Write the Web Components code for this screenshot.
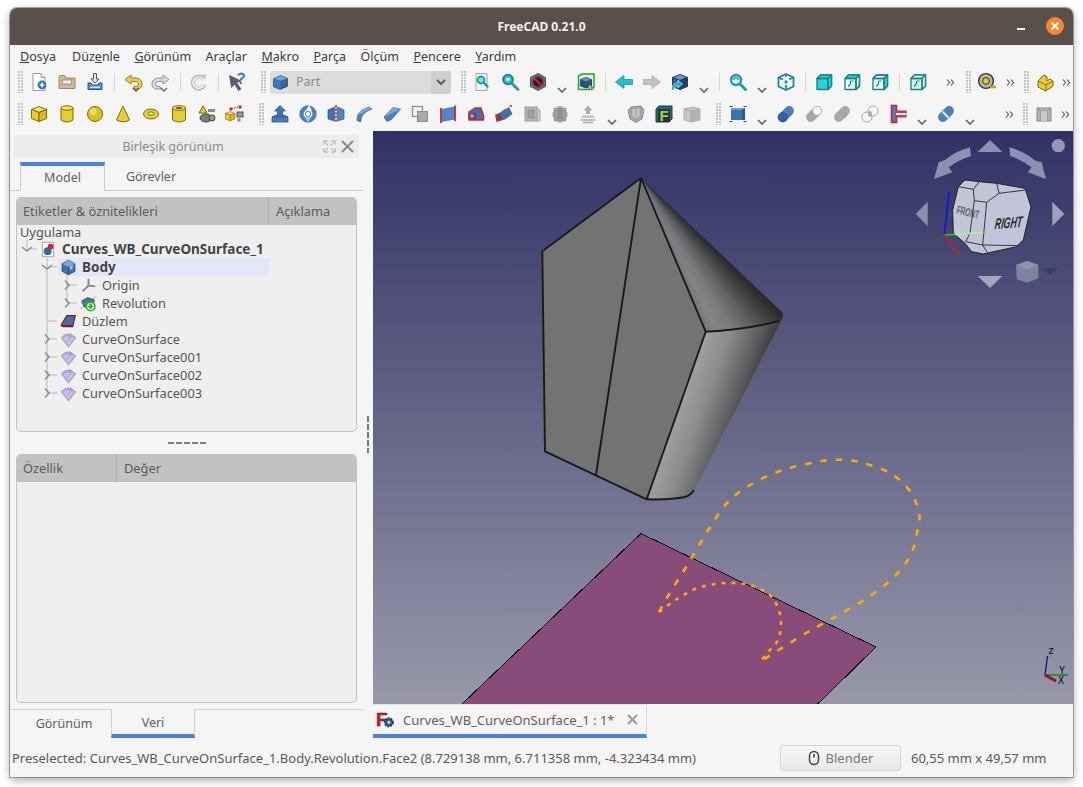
<!DOCTYPE html>
<html lang="tr">
<head>
<meta charset="utf-8">
<title>FreeCAD 0.21.0</title>
<style>
  html, body { margin: 0; background: #fff; font-family: "Noto Sans", "DejaVu Sans", sans-serif; }
  body { width: 1083px; height: 787px; overflow: hidden; padding: 8px 10px 10px; box-sizing: border-box; }
</style>
</head>
<body>
<app-window>
  <title-bar slot="title">FreeCAD 0.21.0</title-bar>

  <menu-bar slot="menu">
    <menu-item style="margin-right:1.5px"><u>D</u>osya</menu-item>
    <menu-item>Düz<u>e</u>nle</menu-item>
    <menu-item><u>G</u>örünüm</menu-item>
    <menu-item>Araçlar</menu-item>
    <menu-item><u>M</u>akro</menu-item>
    <menu-item><u>P</u>arça</menu-item>
    <menu-item>Ölçüm</menu-item>
    <menu-item><u>P</u>encere</menu-item>
    <menu-item><u>Y</u>ardım</menu-item>
  </menu-bar>

  <tool-bar slot="tools">
    <tool-grip></tool-grip>
    <tool-btn icon="new"></tool-btn><tool-btn icon="open"></tool-btn><tool-btn icon="save"></tool-btn>
    <tool-sep></tool-sep>
    <tool-btn icon="undo"></tool-btn><tool-btn icon="redo"></tool-btn>
    <tool-sep></tool-sep>
    <tool-btn icon="refresh"></tool-btn>
    <tool-sep></tool-sep>
    <tool-btn icon="what"></tool-btn>
    <tool-grip style="margin-left:10px;margin-right:3px"></tool-grip>
    <wb-combo>Part</wb-combo>
    <tool-grip style="margin-left:10px"></tool-grip>
    <tool-btn icon="fitall"></tool-btn><tool-btn icon="fitsel"></tool-btn><tool-btn icon="nosym"></tool-btn><tool-chev></tool-chev>
    <tool-btn icon="boxsel"></tool-btn>
    <tool-sep></tool-sep>
    <tool-btn icon="back"></tool-btn><tool-btn icon="fwd"></tool-btn><tool-btn icon="link"></tool-btn><tool-chev></tool-chev>
    <tool-sep></tool-sep>
    <tool-btn icon="zoom"></tool-btn><tool-chev></tool-chev>
    <tool-btn icon="iso"></tool-btn>
    <tool-sep></tool-sep>
    <tool-btn icon="front"></tool-btn><tool-btn icon="top"></tool-btn><tool-btn icon="right"></tool-btn>
    <tool-sep></tool-sep>
    <tool-btn icon="wire"></tool-btn>
    <tool-more style="width:31px;margin-left:3px"></tool-more>
    <tool-grip></tool-grip>
    <tool-btn icon="measure"></tool-btn><tool-more></tool-more>
    <tool-grip style="margin-left:5px"></tool-grip>
    <tool-btn icon="solid"></tool-btn><tool-more style="width:15px"></tool-more>
  </tool-bar>

  <tool-bar slot="tools">
    <tool-grip></tool-grip>
    <tool-btn icon="box"></tool-btn><tool-btn icon="cyl"></tool-btn><tool-btn icon="sphere"></tool-btn><tool-btn icon="cone"></tool-btn>
    <tool-btn icon="torus"></tool-btn><tool-btn icon="tube"></tool-btn><tool-btn icon="prims"></tool-btn><tool-btn icon="builder"></tool-btn>
    <tool-grip style="margin-left:10px"></tool-grip>
    <tool-btn icon="extrude"></tool-btn><tool-btn icon="revolve"></tool-btn><tool-btn icon="mirror"></tool-btn><tool-btn icon="fillet"></tool-btn>
    <tool-btn icon="chamfer"></tool-btn><tool-btn icon="facemake"></tool-btn><tool-btn icon="ruled"></tool-btn><tool-btn icon="loft"></tool-btn>
    <tool-btn icon="sweep"></tool-btn><tool-btn icon="gcomp"></tool-btn><tool-btn icon="gstack"></tool-btn><tool-btn icon="gup"></tool-btn><tool-chev></tool-chev>
    <tool-btn icon="gshell"></tool-btn><tool-btn icon="feat"></tool-btn><tool-btn icon="gcube"></tool-btn>
    <tool-grip style="margin-left:10px;margin-right:2px"></tool-grip>
    <tool-btn icon="compound"></tool-btn><tool-chev></tool-chev>
    <tool-btn icon="bool"></tool-btn><tool-btn icon="cut"></tool-btn><tool-btn icon="fuse"></tool-btn><tool-btn icon="common"></tool-btn>
    <tool-btn icon="join"></tool-btn><tool-chev></tool-chev>
    <tool-btn icon="split"></tool-btn><tool-chev></tool-chev>
    <tool-more style="margin-left:20px"></tool-more>
    <tool-grip style="margin-left:5px"></tool-grip>
    <tool-btn icon="gbox"></tool-btn><tool-more style="width:15px"></tool-more>
  </tool-bar>

  <side-panel slot="side">
    <dock-title>Birleşik görünüm</dock-title>
    <top-tabs></top-tabs>
    <tree-box>
      <tree-head slot="head"><span>Etiketler &amp; öznitelikleri</span><span>Açıklama</span></tree-head>
      <tree-root>Uygulama</tree-root>
      <tree-row level="0" exp="open" last icon="doc" bold>Curves_WB_CurveOnSurface_1</tree-row>
      <tree-row level="1" exp="open" icon="body" bold active>Body</tree-row>
      <tree-row level="2" exp="closed" pass="1" icon="origin">Origin</tree-row>
      <tree-row level="2" exp="closed" pass="1" last icon="rev">Revolution</tree-row>
      <tree-row level="1" icon="plane">Düzlem</tree-row>
      <tree-row level="1" exp="closed" icon="surf">CurveOnSurface</tree-row>
      <tree-row level="1" exp="closed" icon="surf">CurveOnSurface001</tree-row>
      <tree-row level="1" exp="closed" icon="surf">CurveOnSurface002</tree-row>
      <tree-row level="1" exp="closed" last icon="surf">CurveOnSurface003</tree-row>
    </tree-box>
    <h-split></h-split>
    <tree-box style="height:249px;margin-top:0">
      <tree-head slot="head" style="--col:101px"><span>Özellik</span><span>Değer</span></tree-head>
    </tree-box>
    <bottom-tabs></bottom-tabs>
  </side-panel>

  <v-split slot="split"></v-split>

  <view-area slot="view">
    <view-3d></view-3d>
    <doc-tab>Curves_WB_CurveOnSurface_1 : 1*</doc-tab>
  </view-area>

  <status-bar slot="status">Preselected: Curves_WB_CurveOnSurface_1.Body.Revolution.Face2 (8.729138 mm, 6.711358 mm, -4.323434 mm)</status-bar>
</app-window>

<script>
// small helper, every element below is the same shape: css + markup in an open shadow root
function define(name, css, html, setup) {
  const tpl = document.createElement('template');
  tpl.innerHTML = `<style>${css}</style>${html}`;
  customElements.define(name, class extends HTMLElement {
    constructor() {
      super();
      this.attachShadow({ mode: 'open' });
      this.shadowRoot.appendChild(tpl.content.cloneNode(true));
    }
    connectedCallback() { if (setup) setup(this, this.shadowRoot); }
  });
}

// --- icons, all on a 20x20 box ---
const line = '#3a3a3a';
const cube = (t, l, r, s = line) => `<g stroke="${s}" stroke-width=".9" stroke-linejoin="round"><path d="M10 2.5 17.5 5.5 10 8.5 2.5 5.5Z" fill="${t}"/><path d="M2.5 5.5 10 8.5V17.5L2.5 14.5Z" fill="${l}"/><path d="M17.5 5.5 10 8.5V17.5L17.5 14.5Z" fill="${r}"/></g>`;
// the standard view boxes: front face bottom-left, back face shifted up-right
const cyan = '#22d3d8', teal = '#16868c';
const viewBox = (all, topFill, sideFill) => `<g stroke="${teal}" stroke-width="1.4" stroke-linejoin="round">
  <path d="M3 6.5 6.5 3H17.5V14L14 17.5H3Z" fill="${all || '#f2fbfb'}"/>
  <path d="M3 6.5 6.5 3H17.5L14 6.5Z" fill="${topFill || all || 'none'}"/>
  <path d="M14 6.5 17.5 3V14L14 17.5Z" fill="${sideFill || all || 'none'}"/>
  <path d="M3 6.5H14V17.5" fill="none"/></g>`;
const hidden = `<path d="M6 14.5 8.5 12M8.5 9H11.5M8.5 9V12" fill="none" stroke="${teal}" stroke-width="1.2"/>`;
const mag = (c, ring = '#e8ffff') => `<circle cx="8" cy="8" r="5" fill="${ring}" stroke="${c}" stroke-width="2.4"/><path d="M11.5 11.5 17.5 17.5" stroke="${c}" stroke-width="3" stroke-linecap="round"/>`;
const arrow = (c, s) => `<path d="M1.5 10 10 3.5V7.5H18.5V12.5H10V16.5Z" fill="${c}" stroke="${s}" stroke-width=".7" stroke-linejoin="round"/>`;
const blue = '#4a7fbb', bd = '#2a5a90', red = '#d8222a';
// the boolean icons are all the same diagonal capsule
const capsule = (c, w = 9.5) => `<path d="M6.8 13.2 13.2 6.8" stroke="${c}" stroke-width="${w}" stroke-linecap="round"/>`;
const surf = `<path d="M1.5 8Q9 -1 18.5 8L10 18.5Z" fill="#a9a3f0" stroke="#a0a0a0" stroke-width="1"/><path d="M3 8Q9 5 17 8L10 17Z" fill="#c4bff5"/><path d="M12 2.5Q15 7 7 13" fill="none" stroke="#e8763a" stroke-width="1.1" stroke-dasharray="2 1"/><path d="M2.5 9 10 18.5 17.5 9" fill="none" stroke="#b0b0b0" stroke-width="1.5"/>`;
const icons = {
  new: `<path d="M4 1.5H12L16 5.5V18.5H4Z" fill="#fff" stroke="#9a9a9a"/><path d="M12 1.5V5.5H16" fill="#e5e5e5" stroke="#9a9a9a"/><circle cx="13" cy="13" r="4.4" fill="#2f6fc4"/><path d="M10.6 13H15.4M13 10.6V15.4" stroke="#fff" stroke-width="1.5"/>`,
  open: `<path d="M2 5V16.5H18V6H9L7.5 3.5H3Z" fill="#cdb99a" stroke="#9a8869"/><rect x="5.5" y="8" width="9" height="4" fill="#f3efe6" stroke="#8d7a5c" stroke-width=".7"/>`,
  save: `<path d="M8.5 1.5H11.5V7H14L10 11 6 7H8.5Z" fill="#e9e9e9" stroke="#555"/><path d="M3 11V17.5H17V11H14L12.5 13H7.5L6 11Z" fill="#4f8fd0" stroke="#28588c"/><rect x="5" y="14.5" width="10" height="1.5" fill="#d5e6f7"/>`,
  undo: `<path d="M8 3 2 7.5 8 12V9.5H13Q15.5 9.5 15.5 12T13 14.5H11L10 17H13.5Q19 17 19 12T13.5 6H8Z" fill="#ecd146" stroke="#8c7412" stroke-width=".9" stroke-linejoin="round"/><path d="M10 16 13 19 16 16" fill="none" stroke="#555" stroke-width="1.4"/>`,
  redo: `<path d="M12 3 18 7.5 12 12V9.5H7Q4.5 9.5 4.5 12T7 14.5H9L10 17H6.5Q1 17 1 12T6.5 6H12Z" fill="#d9d9d9" stroke="#8c8c8c" stroke-width=".9" stroke-linejoin="round"/><path d="M10 16 13 19 16 16" fill="none" stroke="#666" stroke-width="1.4"/>`,
  refresh: `<path d="M15.5 6.5A7.2 7.2 0 1 0 16.5 13" fill="none" stroke="#c2c2c2" stroke-width="2"/><path d="M14 9A4.4 4.4 0 1 0 14 12" fill="none" stroke="#d5d5d5" stroke-width="1.5"/><path d="M11.5 2.5H17V8Z" fill="#c8c8c8"/>`,
  what: `<path d="M2.5 3.5 14 9 9.5 10.5 14 17 11.5 18.5 7.5 12 4.5 15.5Z" fill="#59616e" stroke="#3c424d" stroke-width=".6"/><path d="M11 3.2Q13.5 .6 16 2.2T15 6.3Q13.8 7 13.8 8.6" fill="none" stroke="#4a7fbb" stroke-width="2.2"/><circle cx="13.8" cy="11" r="1.3" fill="#4a7fbb"/>`,
  fitall: `<path d="M4 1.5H15V18.5H4Z" fill="#f4f4f4" stroke="#a5a5a5"/><circle cx="9" cy="8" r="3.5" fill="#7fdfe2" stroke="#1e9aa2" stroke-width="1.8"/><path d="M11.5 10.5 15.5 14.5" stroke="#1e9aa2" stroke-width="2.4" stroke-linecap="round"/>`,
  fitsel: `<circle cx="8" cy="7.5" r="4.8" fill="#39c2c8" stroke="#16868c" stroke-width="2"/><circle cx="8" cy="7.5" r="1.8" fill="#e8ffff"/><path d="M11.5 11 18 17.5" stroke="#1e9aa2" stroke-width="2.8" stroke-linecap="round"/>`,
  nosym: `<path d="M10 1.5 17.5 5.5V14.5L10 18.5 2.5 14.5V5.5Z" fill="#1f9aa2" stroke="#0f6a70"/><circle cx="10" cy="10" r="5.5" fill="#123" stroke="#d02030" stroke-width="2"/><path d="M6 6 14 14" stroke="#d02030" stroke-width="2.2"/>`,
  boxsel: `<path d="M2.5 4 6 2H18V15L15 17.5H2.5Z" fill="#dfeee0" stroke="#2aa12a" stroke-width="1.5"/><path d="M4.5 7.5 10 5.5 15.5 7.5V14L10 16 4.5 14Z" fill="#27517f" stroke="#1d3350" stroke-width=".8"/><path d="M4.5 7.5 10 5.5 15.5 7.5 10 9.5Z" fill="#5d8fc0"/><path d="M13 13 18 18" stroke="#999" stroke-width="1.6"/><path d="M13 13V17L14.5 15.5H17Z" fill="#fff" stroke="#555" stroke-width=".6"/>`,
  back: arrow('#1cc0c8', '#128a90'),
  fwd: `<g transform="matrix(-1 0 0 1 20 0)">${arrow('#c2c2c2', '#a8a8a8')}</g>`,
  link: cube('#6b9bcb', '#2f5f95', '#1f4470', '#1d3350') + `<path d="M1.5 18Q2 11 8 10.5V8L12.5 12 8 16V13.5Q5 13.5 4 18Z" fill="#21b0c0" stroke="#fff" stroke-width=".5"/>`,
  zoom: mag('#1e9aa2', '#e8ffff') + `<path d="M5.5 8A2.5 2.5 0 0 1 10.5 8" fill="none" stroke="#1e9aa2" stroke-width="1.3"/>`,
  iso: `<g fill="none" stroke="${teal}" stroke-width="1.7" stroke-linejoin="round"><path d="M10 2 17.5 5.5V14.5L10 18 2.5 14.5V5.5Z" fill="#eefafa"/><path d="M2.5 5.5 7 7.5M17.5 5.5 13 7.5M10 18V13M10 2V5"/><path d="M8 10H12M10 8V12" stroke-width="1.2"/></g>`,
  front: viewBox(cyan),
  top: viewBox(null, cyan) + hidden,
  right: viewBox(null, null, cyan) + hidden,
  wire: viewBox('#dff5f6') + hidden,
  measure: `<circle cx="9" cy="9" r="7.4" fill="#b7b7a8" stroke="#333" stroke-width="1.4"/><circle cx="9" cy="9" r="3.4" fill="#e8c92a" stroke="#333"/><path d="M13 15H19" stroke="#c9a914" stroke-width="2.4"/>`,
  solid: `<path d="M3 9 9 3 12 5V9L15 7 18 9V14L11 19 3 15Z" fill="#e8cf30" stroke="#7a6a10" stroke-linejoin="round"/><path d="M3 9 11 13V19M11 13 18 9M9 3 12 5" fill="none" stroke="#7a6a10" stroke-width=".9"/>`,
  box: cube('#f5e650', '#eccf1f', '#dcbb12', '#6e5f10'),
  cyl: `<path d="M4 4V16Q10 20 16 16V4Z" fill="#e8cf30" stroke="#7a6a10"/><ellipse cx="10" cy="4" rx="6" ry="2.2" fill="#f5e650" stroke="#7a6a10"/>`,
  sphere: `<circle cx="10" cy="10" r="7.5" fill="#dcc21f" stroke="#7a6a10"/><circle cx="8" cy="7.5" r="3.5" fill="#efdb55"/>`,
  cone: `<path d="M10 2 16.5 16Q10 19.5 3.5 16Z" fill="#e8cf30" stroke="#7a6a10" stroke-linejoin="round"/>`,
  torus: `<ellipse cx="10" cy="10" rx="7.5" ry="5" fill="#e8cf30" stroke="#7a6a10"/><ellipse cx="10" cy="9.5" rx="3" ry="1.6" fill="#fff7c0" stroke="#7a6a10"/>`,
  tube: `<path d="M3.5 4V16Q10 20 16.5 16V4Z" fill="#e8cf30" stroke="#7a6a10"/><ellipse cx="10" cy="4" rx="6.5" ry="2.4" fill="#f5e650" stroke="#7a6a10"/><ellipse cx="10" cy="4" rx="3.4" ry="1.1" fill="#665a10"/>`,
  prims: `<path d="M6 2 10 9H2Z" fill="#e8cf30" stroke="#6e5f10"/><ellipse cx="9" cy="14" rx="6" ry="4" fill="#7d7d6a" stroke="#444"/><rect x="11" y="5" width="7" height="3" fill="#8f8f80"/><circle cx="15" cy="14" r="3" fill="#9a9a8a" stroke="#444"/>`,
  builder: `<g transform="translate(-1 6) scale(.62)">${cube('#f5e650', '#eccf1f', '#dcbb12', '#6e5f10')}</g><rect x="12" y="8" width="6" height="5" fill="#999" stroke="#555"/><path d="M6 5 13 3" stroke="${red}" stroke-width="1" stroke-dasharray="2 1"/><circle cx="6" cy="5" r="1.7" fill="${red}"/><circle cx="15" cy="3" r="1.7" fill="${red}"/><circle cx="14" cy="16" r="1.7" fill="#888"/>`,
  extrude: `<path d="M2 13 6 11H14L18 13V18H2Z" fill="${blue}" stroke="${bd}" stroke-width=".8"/><path d="M2 13H18" stroke="${bd}" stroke-width=".8"/><path d="M10 1.5 15.5 7H12.5V13H7.5V7H4.5Z" fill="#3d72b0" stroke="${bd}" stroke-width=".8"/>`,
  revolve: `<circle cx="10" cy="10" r="6.2" fill="none" stroke="#4f83bd" stroke-width="3.6"/><circle cx="10" cy="10" r="8.2" fill="none" stroke="${bd}" stroke-width=".8"/><circle cx="10" cy="10" r="2.6" fill="#f5f5f5" stroke="${bd}" stroke-width=".8"/><path d="M11 1 14 7 8 7Z" fill="#f5f5f5"/><path d="M10 19 7 13.5 13 13.5Z" fill="#9dbcdc"/>`,
  mirror: `<path d="M2 6 8.5 3V17L2 15Z" fill="#3d72b0" stroke="${bd}" stroke-width=".7"/><path d="M18 6 11.5 3V17L18 15Z" fill="#4f83bd" stroke="${bd}" stroke-width=".7"/><path d="M10 1V19" stroke="${red}" stroke-width="1.6" stroke-dasharray="2.4 1.2"/>`,
  fillet: `<path d="M3 15Q4 6 15 3L18 5Q9 8 7.5 13.5L6.5 18 3 16.5Z" fill="${blue}" stroke="${bd}" stroke-width=".7"/><path d="M3 11Q6 5 15 3L18 5Q11 6.5 8 10Z" fill="#7aa6d6"/>`,
  chamfer: `<path d="M2 13 11 3.5 18.5 5 9.5 15.5 5 17.5Z" fill="${blue}" stroke="${bd}" stroke-width=".7"/><path d="M2 13 11 3.5 18.5 5 9 10Z" fill="#7aa6d6"/>`,
  facemake: `<rect x="2.5" y="2.5" width="10" height="10" fill="#f5f5f5" stroke="#8f8f8f" stroke-width="1.3"/><rect x="7.5" y="7.5" width="10" height="10" fill="#aaa" stroke="#8f8f8f"/>`,
  ruled: `<path d="M3 5 17 2.5V15.5L3 18Z" fill="#4f88c8"/><path d="M3 4V19M17 1.5V17" stroke="${red}" stroke-width="1.8"/>`,
  loft: `<path d="M3 8 9 4H15L17.5 12V16H3Z" fill="#3d72b0" stroke="${red}" stroke-width="1.5" stroke-linejoin="round"/><path d="M3 9H10V15H3Z" fill="#2a5a90" stroke="${red}"/><rect x="4.5" y="10.5" width="3" height="3" fill="#9dbcdc"/>`,
  sweep: `<path d="M2 12 10 6 15 4 18 10 11 15 4 17Z" fill="#3d72b0" stroke="${bd}" stroke-width=".7"/><path d="M2 11 6 10 8 15 3 17Z" fill="#2a5a90" stroke="${red}" stroke-width="1.5"/><path d="M13 5 17 1.5" stroke="${red}" stroke-dasharray="2 1"/><circle cx="17" cy="2" r="1" fill="${red}"/>`,
  gcomp: `<rect x="3" y="3" width="12" height="14" fill="#b2b2b2" stroke="#a0a0a0"/><path d="M15 4 18 6V17L15 17Z" fill="#c9c9c9" stroke="#a8a8a8"/><rect x="6" y="6" width="6" height="8" fill="#a0a0a0" stroke="#8f8f8f"/>`,
  gstack: `<path d="M4 4H16V8H4ZM3 8.5H17V12.5H3ZM4 13H16V17H4Z" fill="#a0a0a0" stroke="#8f8f8f" stroke-width=".6"/><path d="M7.5 2H12.5V18.5H7.5Z" fill="#8a8a8a" opacity=".65"/>`,
  gup: `<path d="M10 1.5 14.5 6.5H12V10H8V6.5H5.5Z" fill="#adadad"/><path d="M5 11.5H15L17.5 14H2.5Z" fill="#c0c0c0"/><path d="M2.5 16H17.5M5 18.5H15" stroke="#a8a8a8" stroke-width="1.4"/>`,
  gshell: `<path d="M5 3 15 2 18 6 16 15 10 18.5 4 15 2 6Z" fill="#a8a8a8" stroke="#8f8f8f"/><path d="M5.5 4.5 14.5 4 14 13 10 15.5 6 13Z" fill="#c4c4c4" stroke="#929292" stroke-width=".7"/><path d="M10 4V15" stroke="#929292" stroke-width=".7"/>`,
  feat: `<path d="M2 5 5 2H18V15L15 18H2Z" fill="#2b6486" stroke="#14384d"/><rect x="4" y="5" width="12" height="13" fill="#26333a"/><text x="10" y="17" font-size="15" font-weight="700" font-family="Liberation Sans" fill="#9ddb1a" text-anchor="middle">F</text>`,
  gcube: `<path d="M2 5 11 3 18 5V16L9 18 2 16Z" fill="#c6c6c6" stroke="#b0b0b0"/><path d="M2 5 9 7 18 5M9 7V18" fill="none" stroke="#a6a6a6"/><path d="M9 7 18 5V16L9 18Z" fill="#b3b3b3"/>`,
  compound: `<path d="M3 4H17V16H3Z" fill="#3d72b0"/><path d="M3 4H17L14 6H3Z" fill="#6f9ccb"/><path d="M14 6 17 4V16L14 16Z" fill="#2a5a90"/><path d="M1.5 2.5H4.5M15.5 2.5H18.5M1.5 17.5H4.5M15.5 17.5H18.5" stroke="#444" stroke-width="1"/>`,
  bool: capsule('#4a7fbb') + `<circle cx="6.8" cy="13.2" r="4.7" fill="#2f62a0" stroke="${bd}" stroke-width=".8"/>`,
  cut: capsule('#a8a8a8') + `<circle cx="13.2" cy="6.8" r="4.4" fill="#fafafa" stroke="#b0b0b0" stroke-width=".8"/>`,
  fuse: capsule('#a8a8a8') + `<path d="M9.5 6.5A4.7 4.7 0 0 1 13.5 13.5" fill="none" stroke="#9a9a9a" stroke-width=".8"/>`,
  common: `<circle cx="7" cy="13" r="5" fill="#f7f7f7" stroke="#a8a8a8"/><circle cx="13" cy="7" r="5" fill="#f7f7f7" stroke="#a8a8a8"/><path d="M8 8.2A5 5 0 0 1 11.8 11.8 5 5 0 0 1 8 8.2" fill="#aaa"/><path d="M8.1 8.1Q7.3 11 9.3 12.9L11.9 11.9Q12.7 9 10.7 7.1Z" fill="#aaa"/>`,
  join: `<rect x="3.5" y="1.5" width="5" height="17" fill="${blue}" stroke="${red}" stroke-width="1.6"/><path d="M8.5 7H18V9H8.5M8.5 11H18V13H8.5" fill="${blue}" stroke="${red}" stroke-width="1.2"/><rect x="8" y="9" width="10" height="2" fill="#dfe8f2"/>`,
  split: capsule('#4a7fbb') + `<path d="M6.5 7.5 12.5 13.5" stroke="#f5f5f5" stroke-width="2.2"/><path d="M5 5 15 15" stroke="${bd}" stroke-width=".6" opacity=".4"/>`,
  gbox: `<rect x="3" y="4" width="14" height="13" fill="#b5b5b5" stroke="#8a8a8a"/><path d="M3 4 7 7H13L17 4M7 7V17M13 7V17" fill="none" stroke="#8a8a8a"/><rect x="7" y="7" width="6" height="10" fill="#c9c9c9"/>`,
  part: `<path d="M2 5.5 10 2 18 5V14.5L9.5 18 2 15Z" fill="#2f66a8" stroke="#1d3350" stroke-linejoin="round"/><path d="M2 5.5 10 2 18 5 10 8Z" fill="#73a2d4"/><path d="M2 5.5 10 8V18L2 15Z" fill="#3f78bc"/>`,
  doc: `<path d="M3 1.5H16V18.5H3Z" fill="#fff" stroke="#9a9a9a"/><circle cx="9" cy="12" r="4.6" fill="#2f6aa8"/><circle cx="12.5" cy="6.5" r="3.4" fill="#d8222a"/>`,
  body: `<path d="M10 1.5 17.5 5.5V14.5L10 18.5 2.5 14.5V5.5Z" fill="#3f74b0" stroke="#1f4470"/><path d="M2.5 5.5 10 1.5 17.5 5.5 10 9.5Z" fill="#7aa6d6"/><path d="M10 9.5V18.5" stroke="#1f4470"/><path d="M11.5 9 15 7V11L11.5 13Z" fill="#a9c6e6"/>`,
  origin: `<path d="M10 10V2M10 10 18 11M10 10 3 17" fill="none" stroke="#8a8a8a" stroke-width="2.2"/>`,
  rev: `<path d="M2 7 9 3 17 6 14 14 5 14Z" fill="#4779ad" stroke="#274a70"/><path d="M1 16 18 2" stroke="#d8222a" stroke-dasharray="2 1"/><circle cx="12.5" cy="13.5" r="5" fill="#fff" stroke="#18c418" stroke-width="2"/><path d="M11 10H14V13H16L12.5 17 9 13H11Z" fill="#18c418"/>`,
  plane: `<path d="M1.5 14 8 3H18L15 16H4Z" fill="#3f70a8" stroke="#8b1a22" stroke-width="1.4" stroke-linejoin="round"/><path d="M1 15H15" stroke="#8b1a22" stroke-width="1.6"/>`,
  surf,
  fcad: `<text x="0" y="17" font-size="20" font-weight="700" font-family="Liberation Sans" fill="#c8202a" stroke="#5a1015" stroke-width=".5">F</text><circle cx="13.5" cy="13" r="4.2" fill="#33609c" stroke="#1f3d66" stroke-width="2.2" stroke-dasharray="2 1"/><circle cx="13.5" cy="13" r="1.4" fill="#e4e8f0"/>`
};
const svgIcon = (n, s = 20) => `<svg width="${s}" height="${s}" viewBox="0 0 20 20" aria-hidden="true">${icons[n] || ''}</svg>`;
const pick = sel => (el, root) => { root.querySelector(sel).innerHTML = svgIcon(el.getAttribute('icon'), +el.getAttribute('size') || 20); };

// --- window shell ---
define('app-window', `
  :host { display: grid; width: 1063px; height: 769px; background: #f5f5f5; border-radius: 7px 7px 0 0; overflow: hidden;
    grid-template-columns: 353px 10px 700px; grid-template-rows: 37px 22px 64px 607px 39px;
    box-shadow: 0 0 0 1px rgba(0,0,0,.3), 0 3px 10px rgba(0,0,0,.35); color: #555; }
  .wide { grid-column: 1 / 4; }
  .tools { display: flex; flex-direction: column; gap: 2px; }
`, `
  <div class="wide"><slot name="title"></slot></div>
  <div class="wide"><slot name="menu"></slot></div>
  <div class="wide tools"><slot name="tools"></slot></div>
  <slot name="side"></slot><slot name="split"></slot><slot name="view"></slot>
  <div class="wide"><slot name="status"></slot></div>
`);

define('title-bar', `
  :host { display: flex; height: 37px; align-items: center; justify-content: center; position: relative; background: #5a504b;
    color: #f4f2f0; font: 700 12px "Noto Sans", sans-serif; }
  .btns { position: absolute; right: 9px; top: 9px; display: flex; align-items: center; gap: 21px; height: 18px; }
  .min { width: 8px; height: 2px; background: #fff; margin-top: 6px; }
  .close { width: 18px; height: 18px; border-radius: 50%; background: #f6872d; display: flex; align-items: center; justify-content: center; }
`, `<slot></slot><div class="btns"><div class="min"></div><div class="close"><svg width="10" height="10" viewBox="0 0 10 10"><path d="M1.5 1.5 8.5 8.5M8.5 1.5 1.5 8.5" stroke="#fff" stroke-width="1.9"/></svg></div></div>`);

define('menu-bar', `
  :host { display: flex; height: 22px; padding: 1px 0 0 10px; gap: 14.5px; align-items: center; box-sizing: border-box; color: #3c3c3c; font: 12.5px "Noto Sans", sans-serif; }
`, `<slot></slot>`);
define('menu-item', `:host { display: block; white-space: nowrap; }`, `<slot></slot>`);

// --- toolbars ---
define('tool-bar', `:host { display: flex; height: 30px; align-items: center; padding-left: 8px; }`, `<slot></slot>`);
define('tool-btn', `:host { display: flex; flex: none; width: 28px; height: 28px; align-items: center; justify-content: center; } svg { display: block; }`, `<span id="i" style="display:contents"></span>`, pick('#i'));
define('tool-sep', `:host { display: flex; flex: none; width: 10px; justify-content: center; } i { width: 1px; height: 18px; background: #d6d6d6; }`, `<i></i>`);
define('tool-grip', `:host { display: block; flex: none; width: 6px; height: 22px; margin-right: 1px;
  background: radial-gradient(circle at 1px 1px, #c4c4c4 1px, transparent 1.2px) 0 0 / 3px 3px; }`, ``);
define('tool-chev', `:host { display: flex; flex: none; width: 20px; height: 28px; justify-content: center; align-items: flex-end; padding-bottom: 3px; box-sizing: border-box; }`,
  `<svg width="10" height="6" viewBox="0 0 10 6"><path d="M1 1 5 5 9 1" fill="none" stroke="#666" stroke-width="1.7"/></svg>`);
define('tool-more', `:host { display: flex; flex: none; width: 18px; height: 28px; justify-content: center; align-items: center; }`,
  `<svg width="9" height="7" viewBox="0 0 9 7"><path d="M1 .5 3.6 3.5 1 6.5M5 .5 7.6 3.5 5 6.5" fill="none" stroke="#555" stroke-width="1.1"/></svg>`);
define('wb-combo', `
  :host { display: flex; flex: none; width: 181px; height: 23px; background: #dcdcdc; border-radius: 3px; overflow: hidden; align-items: center; color: #8a8a8a; font: 12.5px "Noto Sans", sans-serif; }
  .ic { margin: 0 3px 0 2px; display: flex; } .t { flex: 1; padding-left: 4px; line-height: 22px; }
  .arrow { width: 20px; height: 23px; background: #cfcfcf; display: flex; align-items: center; justify-content: center; }
`, `<span class="ic">${svgIcon('part', 17)}</span><span class="t"><slot></slot></span><span class="arrow"><svg width="10" height="6" viewBox="0 0 10 6"><path d="M1 1 5 5 9 1" fill="none" stroke="#555" stroke-width="1.8"/></svg></span>`);

// --- left dock ---
define('side-panel', `:host { display: flex; flex-direction: column; padding-top: 4px; box-sizing: border-box; width: 353px; } ::slotted(*) { flex: none; }`, `<slot></slot>`);
define('dock-title', `
  :host { display: flex; height: 23px; margin: 0 4px; width: 345px; box-sizing: border-box; padding-right: 27px; background: #ececec; border-radius: 2px; align-items: center; justify-content: center; position: relative; color: #8b8b8b; font: 12.5px "Noto Sans", sans-serif; }
  .b { position: absolute; right: 5px; top: 5px; display: flex; gap: 5px; align-items: center; }
`, `<slot></slot><span class="b">
  <svg width="13" height="13" viewBox="0 0 13 13"><path d="M1 4.5V1H4.5M8.5 1H12V4.5M1 8.5V12H4.5M12 8.5V12H8.5M3 3 5 5M10 3 8 5M3 10 5 8M10 10 8 8" fill="none" stroke="#9a9a9a" stroke-width="1"/></svg>
  <svg width="13" height="13" viewBox="0 0 13 13"><path d="M1 1 12 12M12 1 1 12" stroke="#8a8a8a" stroke-width="2"/></svg></span>`);
define('top-tabs', `
  :host { display: flex; height: 29px; margin-top: 4px; padding-left: 10px; border-bottom: 1px solid #cdcdcd; box-sizing: border-box; font: 12.5px "Noto Sans", sans-serif; color: #606060; }
  div { display: flex; align-items: center; justify-content: center; height: 28px; box-sizing: border-box; }
  .on { width: 85px; border-top: 4px solid #4a80ea; border-left: 1px solid #cdcdcd; border-right: 1px solid #cdcdcd; background: #f5f5f5; margin-bottom: -1px; height: 29px; padding-bottom: 2px; }
  .off { width: 92px; padding-top: 1px; }
`, `<div class="on">Model</div><div class="off">Görevler</div>`);
define('tree-box', `
  :host { display: block; width: 341px; height: 235px; margin: 6px 0 0 6px; box-sizing: border-box; background: #efefef; border: 1px solid #c2c2c2; border-top: 0; border-radius: 5px; overflow: hidden; font: 12.8px "Noto Sans", sans-serif; color: #555; }
`, `<slot name="head"></slot><slot></slot>`);
define('tree-head', `
  :host { display: grid; grid-template-columns: var(--col, 253px) 1fr; height: 28px; margin: 0 -1px; background: #c2c2c2; align-items: center; color: #5a5a5a; }
  ::slotted(span) { padding-left: 7px; line-height: 28px; }
  ::slotted(span:first-child) { border-right: 1px solid #acacac; }
`, `<slot></slot>`);
define('tree-root', `:host { display: block; height: 15px; line-height: 15px; padding-left: 3px; }`, `<slot></slot>`);
define('tree-row', `
  :host { display: flex; width: 253px; height: 18px; align-items: center; }
  svg.g { flex: none; display: block; }
  .item { flex: 1; display: flex; align-items: center; height: 18px; gap: 5px; padding-left: 2px; white-space: nowrap; min-width: 0; }
  .ic { display: flex; }
  :host([bold]) .item { font-weight: 700; font-size: 13.5px; color: #444; }
  :host([active]) .item { background: #e6e6fa; }
`, `<svg class="g" height="18"></svg><div class="item"><span class="ic"></span><slot></slot></div>`, (el, root) => {
  const lv = +el.getAttribute('level'), exp = el.getAttribute('exp'), last = el.hasAttribute('last');
  const pass = (el.getAttribute('pass') || '').split(',').filter(Boolean).map(Number);
  const x = 10 + 20 * lv;
  let d = `<path d="M${x} 0V${last ? 9 : 18}M${x} 9H${x + 10}" stroke="#b9b9b9" fill="none"/>`;
  pass.forEach(c => { d += `<path d="M${10 + 20 * c} 0V18" stroke="#b9b9b9"/>`; });
  if (exp === 'open') d += `<path d="M${x - 5} 7 ${x} 11 ${x + 5} 7" stroke="#8d8d8d" stroke-width="1.5" fill="none"/>`;
  if (exp === 'closed') d += `<path d="M${x - 2} 4.5 ${x + 2} 9 ${x - 2} 13.5" stroke="#8d8d8d" stroke-width="1.5" fill="none"/>`;
  const g = root.querySelector('svg.g');
  g.setAttribute('width', 20 * (lv + 1) + 1);
  g.innerHTML = d;
  root.querySelector('.ic').innerHTML = svgIcon(el.getAttribute('icon'), 17);
});
define('h-split', `:host { display: flex; height: 22px; padding-right: 8px; justify-content: center; align-items: center; } i { width: 38px; height: 2px; background: repeating-linear-gradient(90deg, #808080 0 6px, transparent 6px 8px); margin-left: 8px; }`, `<i></i>`);
define('bottom-tabs', `
  :host { display: flex; height: 29px; margin-top: 6px; font: 12.5px "Noto Sans", sans-serif; color: #606060; }
  div { height: 29px; display: flex; align-items: center; justify-content: center; box-sizing: border-box; }
  .off { width: 101px; padding-left: 7px; border-top: 1px solid #d2d2d2; padding-bottom: 1px; }
  .on { width: 84px; border-bottom: 4px solid #4a80ea; border-left: 1px solid #d2d2d2; border-right: 1px solid #d2d2d2; padding-top: 2px; }
  .rest { flex: 1; border-top: 1px solid #d2d2d2; }
`, `<div class="off">Görünüm</div><div class="on">Veri</div><div class="rest"></div>`);
define('v-split', `:host { display: flex; align-items: center; justify-content: center; padding-right: 1px; } i { width: 2px; height: 37px; background: repeating-linear-gradient(180deg, #777 0 6px, transparent 6px 8px); }`, `<i></i>`);

// --- 3d view ---
// smooth line through the points, the dashes look wrong on a plain polyline
const spline = pts => {
  let d = `M${pts[0]}`;
  for (let i = 0; i < pts.length - 1; i++) {
    const p0 = pts[i - 1] || pts[i], p1 = pts[i], p2 = pts[i + 1], p3 = pts[i + 2] || p2;
    d += `C${p1[0] + (p2[0] - p0[0]) / 6} ${p1[1] + (p2[1] - p0[1]) / 6} ${p2[0] - (p3[0] - p1[0]) / 6} ${p2[1] - (p3[1] - p1[1]) / 6} ${p2[0]} ${p2[1]}`;
  }
  return d;
};
const curveA = spline([[659, 612], [668, 596], [688, 564], [707, 532], [727, 503], [750, 485], [783, 470], [817, 462], [832, 460], [847, 460], [863, 463], [890, 473], [910, 491], [919, 513], [918, 527], [912, 552], [897, 574], [873, 594], [842, 613], [808, 632], [777, 651], [762, 661]]);
const curveB = spline([[659, 612], [677, 599], [695, 589], [715, 584], [735, 583], [753, 586], [770, 595], [778, 608], [781, 623], [778, 640], [768, 652], [761, 661]]);

// the cone has no svg gradient that fits, so a fan of thin wedges from the apex
const coneStops = [[0, [118, 118, 118]], [.15, [134, 134, 134]], [.35, [124, 124, 124]], [.6, [98, 98, 98]], [.85, [60, 60, 60]], [1, [40, 40, 40]]];
const coneColor = t => {
  let i = 0;
  while (i < coneStops.length - 2 && t > coneStops[i + 1][0]) i++;
  const [a, ca] = coneStops[i], [b, cb] = coneStops[i + 1], k = (t - a) / (b - a);
  return `rgb(${ca.map((v, n) => Math.round(v + (cb[n] - v) * k)).join(',')})`;
};
let coneFan = '';
for (let i = 0; i < 30; i++) {
  const at = t => [641 + (705.7 + 77.6 * t - 641) * 1.1, 178 + (331.7 - 17.7 * t - 178) * 1.1 + 8 * Math.sin(Math.PI * t)].join(' ');
  const c = coneColor((i + .5) / 30);
  coneFan += `<path d="M641 178L${at(i / 30)}L${at((i + 1.2) / 30)}Z" fill="${c}"/>`;
}

define('view-area', `:host { display: flex; flex-direction: column; width: 700px; height: 607px; }`, `<slot></slot>`);
define('view-3d', `:host { display: block; width: 700px; height: 573px; } svg { display: block; }`, `
<svg width="700" height="573" viewBox="373 131 700 573" font-family="Liberation Sans">
  <defs>
    <linearGradient id="bg" x1="0" y1="0" x2="0" y2="1"><stop offset="0" stop-color="#313165"/><stop offset="1" stop-color="#9898aa"/></linearGradient>
    <linearGradient id="cyl" gradientUnits="userSpaceOnUse" x1="672" y1="413" x2="746" y2="440"><stop offset="0" stop-color="#a4a4a4"/><stop offset=".35" stop-color="#8b8b8b"/><stop offset=".7" stop-color="#5c5c5c"/><stop offset="1" stop-color="#2c2c2c"/></linearGradient>
    <clipPath id="coneClip"><path d="M641 178 782 311Q785 318 779 322Q745 330 705.7 331.7Z"/></clipPath>
    <filter id="soft" x="-20%" y="-20%" width="140%" height="140%"><feGaussianBlur stdDeviation="1"/></filter>
  </defs>
  <rect x="373" y="131" width="700" height="573" fill="url(#bg)"/>

  <path d="M641 533.5 876 647 817.7 704H462Z" fill="#874c7a" stroke="#111" stroke-width="1" shape-rendering="crispEdges"/>
  <path d="${curveA}" fill="none" stroke="#ffaa00" stroke-width="2.6" stroke-dasharray="6.5 9"/>
  <path d="${curveB}" fill="none" stroke="#ffaa00" stroke-width="2.6" stroke-dasharray="4 6"/>

  <path d="M641 178 542.3 251.3 545 451.3 646.7 499.3 705.7 331.7Z" fill="#737373"/>
  <path d="M705.7 331.7 781.7 320 693.3 491.7Q688 499 668 499.6L646.7 499.3Z" fill="url(#cyl)"/>
  <g clip-path="url(#coneClip)">${coneFan}</g>
  <g fill="none" stroke="#1a1a1a" stroke-width="1.9" stroke-linejoin="round">
    <path d="M641 178 542.3 251.3 545 451.3 646.7 499.3Q670 500 685 497Q691 495 694 490"/>
    <path d="M641 178 596 475M641 178 705.7 331.7 646.7 499.3M705.7 331.7Q745 330 779 321"/>
  </g>

  <g transform="translate(890 130) scale(.3333)">
    <g fill="#8c90b2">
      <circle cx="505" cy="47" r="20" fill="#9397b6"/>
      <path d="M300 30 337 66H263Z"/>
      <path d="M240 52Q195 65 165 90L146 97 132 147 187 127 176 112Q205 90 243 78Z"/>
      <path d="M358 52Q405 65 436 92L455 97 468 147 413 127 425 112Q397 90 361 78Z"/>
      <path d="M77 252 113 215V288Z"/>
      <path d="M523 252 487 215V288Z" fill="#9da0bc"/>
      <path d="M300 474 263 438H337Z" fill="#a4a6bf"/>
    </g>
    <path d="M225 150 268 155 320 160 405 175 423 230 400 330 380 350 280 372 245 365 225 340 190 310 188 240 205 170Z" fill="#c2c5d8" stroke="#222" stroke-width="3" stroke-linejoin="round"/>
    <g fill="none" stroke="#222" stroke-width="2.6" stroke-linejoin="round">
      <path d="M205 170 250 178 268 155M320 160 327 190 408 180M250 178 253 212 290 217 327 190M253 212 240 310 227 335M290 217 278 345 292 368M227 335 278 345 385 347"/>
    </g>
    <text transform="translate(313 298) rotate(-5) skewX(-12)" font-size="46" font-weight="700" font-style="italic" fill="#2a2a2a" textLength="82" lengthAdjust="spacingAndGlyphs">RIGHT</text>
    <text transform="translate(198 250) rotate(14) scale(.62 1)" font-size="32" font-weight="700" fill="#3a3a42" opacity=".8" filter="url(#soft)">FRONT</text>
    <g fill="none" stroke-linecap="round">
      <path d="M163 315 177 187" stroke="#1111ee" stroke-width="5"/>
      <path d="M163 315 197 313" stroke="#18d018" stroke-width="5"/>
      <path d="M197 313 278 307" stroke="#a6f0a6" stroke-width="5"/>
      <path d="M163 315 212 377" stroke="#ee1111" stroke-width="4"/>
    </g>
    <path d="M378 405 412 393 445 405V445L412 458 380 448Z" fill="#7f82a0"/>
    <path d="M412 418 445 405 412 393 378 405Z" fill="#9093ae"/>
    <path d="M458 415H503L480 435Z" fill="#3c3c62"/>
  </g>

  <g fill="none">
    <path d="M1045 675 1047.5 656" stroke="#1a1a88" stroke-width="1.4"/>
    <path d="M1045 675H1068" stroke="#1a8a1a" stroke-width="1.6"/>
    <path d="M1045 675 1056 681" stroke="#8a1a1a" stroke-width="3"/>
  </g>
  <g font-family="DejaVu Sans Mono" font-size="10" fill="#111">
    <text x="1048" y="654">z</text><text x="1059" y="674">Y</text><text x="1058" y="684">X</text>
  </g>
</svg>`);

define('doc-tab', `
  :host { display: flex; width: 274px; height: 34px; box-sizing: border-box; border-bottom: 4px solid #4a80ea; border-right: 1px solid #d8d8d8; border-top: 1px solid #e2e2e2;
    align-items: center; font: 13px "Noto Sans", sans-serif; color: #606060; white-space: nowrap; }
  .ic { margin: 0 4px 0 3px; display: flex; }
  .t { flex: 1; padding-left: 4px; }
  .x { margin-right: 8px; display: flex; }
`, `<span class="ic">${svgIcon('fcad', 19)}</span><span class="t"><slot></slot></span><span class="x"><svg width="11" height="11" viewBox="0 0 11 11"><path d="M1 1 10 10M10 1 1 10" stroke="#999" stroke-width="1.9"/></svg></span>`);

define('status-bar', `
  :host { display: flex; height: 39px; align-items: center; padding: 3px 25px 3px 2px; box-sizing: border-box; font: 13px "Noto Sans", sans-serif; color: #595959; white-space: nowrap; }
  .t { flex: 1; }
  .btn { width: 121px; height: 26px; box-sizing: border-box; border: 1px solid #d4d4d4; border-radius: 3px; background: linear-gradient(#f7f7f7, #e7e7e7); display: flex; align-items: center; justify-content: center; gap: 6px; color: #777; }
  .d { margin-left: 10px; width: 137px; }
`, `<span class="t"><slot></slot></span><span class="btn"><svg width="12" height="16" viewBox="0 0 12 16"><rect x="1.5" y="1.5" width="9" height="13" rx="4.5" fill="#f5f5f5" stroke="#444" stroke-width="1.5"/><path d="M6 4V7.5" stroke="#444" stroke-width="1.6"/></svg>Blender</span><span class="d">60,55 mm x 49,57 mm</span>`);
</script>
</body>
</html>
